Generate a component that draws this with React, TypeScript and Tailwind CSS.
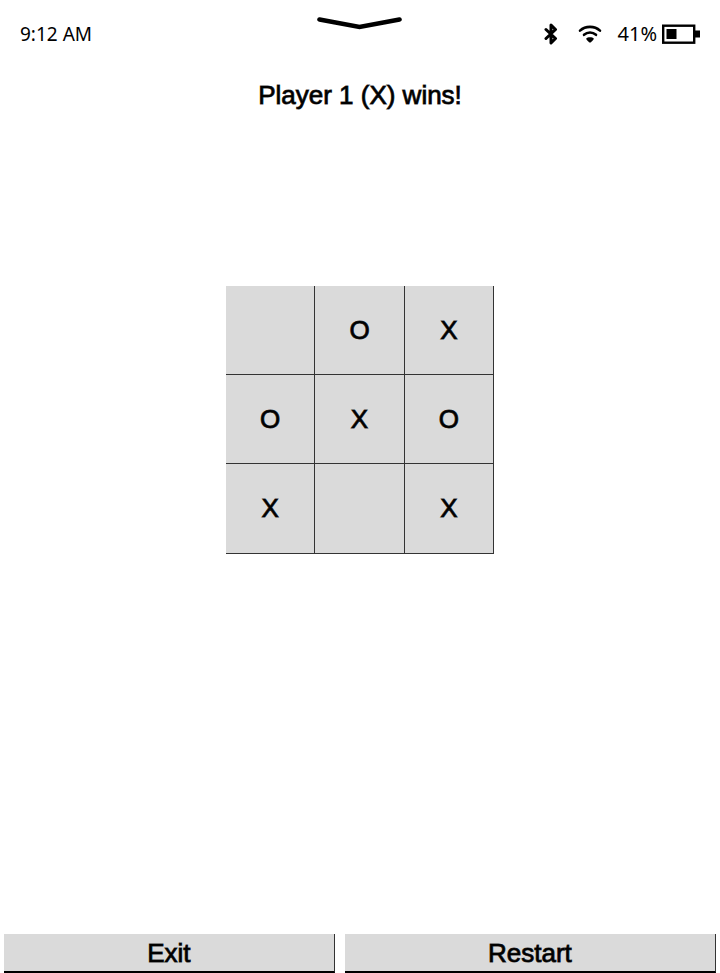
import React from 'react';

type Mark = 'X' | 'O' | '';

interface PanelButtonProps {
    label: string;
    ariaLabel?: string;
    className?: string;
}

const cells: Mark[] = ['', 'O', 'X', 'O', 'X', 'O', 'X', '', 'X'];

const BluetoothIcon: React.FC = () => (
    <svg width="14" height="22" viewBox="0 0 14 22" fill="none" stroke="black" strokeWidth="3" strokeLinejoin="round" strokeLinecap="round" aria-hidden="true">
        <path d="M2 6.5 11.5 15.5 7 20V2l4.5 4.5L2 15.5" />
    </svg>
);

const WifiIcon: React.FC = () => (
    <svg width="24" height="18" viewBox="0 0 24 18" fill="none" stroke="black" strokeWidth="2.6" strokeLinecap="round" aria-hidden="true">
        <path d="M2 5.600C7.500 .6 16.500 .6 22 5.600" />
        <path d="M6 9.800c3.500-3 8.500-3 12 0" />
        <path d="M8.200 13.400C9.500 11.800 14.500 11.800 15.800 13.400C15.800 14.600 13 17.500 12 17.500S8.200 14.600 8.200 13.400Z" fill="black" stroke="none" />
    </svg>
);

const BatteryIcon: React.FC = () => (
    <svg width="39" height="20" viewBox="0 0 39 20" aria-hidden="true">
        <rect x="2.2" y="1.7" width="31" height="17" fill="none" stroke="black" strokeWidth="2.4" />
        <rect x="5.500" y="5" width="10" height="10" fill="black" />
        <rect x="34" y="6.500" width="5" height="7" fill="black" />
    </svg>
);

const StatusBar: React.FC = () => (
    <header className="grid h-[68px] grid-cols-[1fr_auto_1fr] items-center px-5 font-['Noto_Sans',sans-serif]">
        <span className="text-[19px]">9:12 AM</span>
        {/* Pull-down handle */}
        <svg className="mt-4 self-start" width="86" height="14" viewBox="0 0 86 14" fill="none" stroke="black" strokeWidth="4.6" strokeLinecap="round" aria-hidden="true">
            <path d="M2.500 3.500 42.500 11 82.500 3.500" />
        </svg>
        <div className="flex items-center justify-end text-xl">
            <BluetoothIcon />
            <span className="ml-5">
                <WifiIcon />
            </span>
            <span className="mr-1 ml-4">41%</span>
            <BatteryIcon />
        </div>
    </header>
);

const PanelButton: React.FC<PanelButtonProps> = ({ label, ariaLabel, className = '' }) => (
    <button
        type="button"
        aria-label={ariaLabel}
        className={`border-r border-[#333] bg-[#dadada] text-[26px] leading-none [-webkit-text-stroke:1px_#000000cc] ${className}`}
    >
        {label}
    </button>
);

const App: React.FC = () => {
    return (
        <div className="flex min-h-screen flex-col bg-white font-['Liberation_Sans',Arial,sans-serif] text-black">
            <StatusBar />

            <h1 className="mt-3 text-center text-[26px] leading-[30px] [-webkit-text-stroke:1px_#000000cc]">
                Player 1 (X) wins!
            </h1>

            <main className="flex flex-1 items-center justify-center pb-[205px]">
                <div className="grid aspect-square w-[268px] grid-cols-3 grid-rows-3">
                    {cells.map((mark, index) => (
                        <PanelButton
                            key={index}
                            label={mark}
                            ariaLabel={mark ? undefined : 'Empty cell'}
                            className="border-b"
                        />
                    ))}
                </div>
            </main>

            <footer className="flex gap-[10px] px-1">
                <PanelButton label="Exit" className="h-[39px] flex-auto border-b-2 border-b-black" />
                <PanelButton label="Restart" className="h-[39px] flex-auto border-b-2 border-b-black" />
            </footer>
        </div>
    );
};

export default App;
